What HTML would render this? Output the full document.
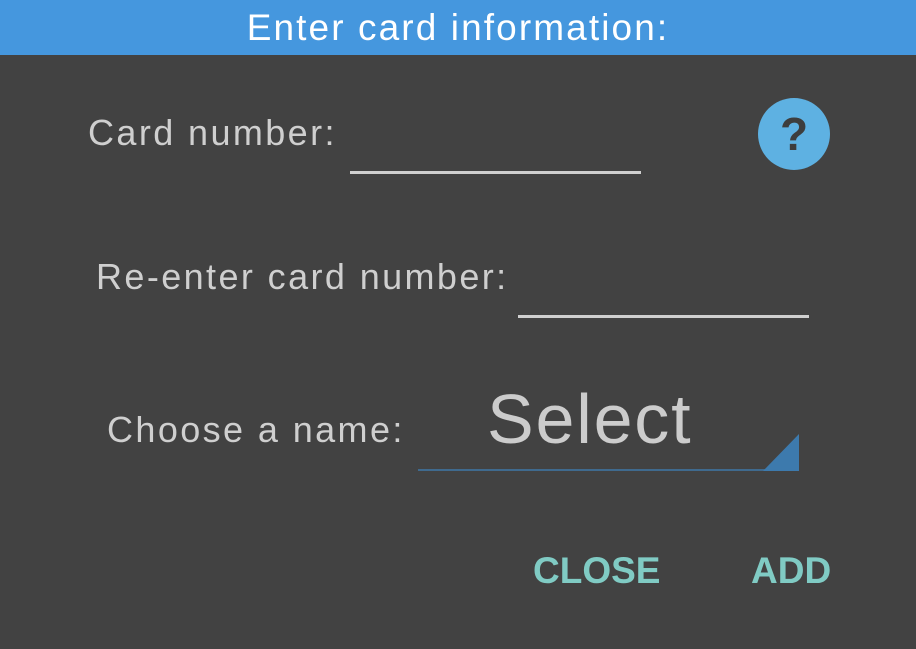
<!DOCTYPE html>
<html><head><style>
html,body{margin:0;padding:0}
body{width:916px;height:649px;background:#424242;position:relative;overflow:hidden;font-family:"Liberation Sans",sans-serif}
.h{position:absolute;left:0;top:0;width:916px;height:55px;background:#4597de;color:#fff;font-size:37px;text-align:center;line-height:55px;letter-spacing:2.1px}
.t{position:absolute;color:#cfcfcf;font-size:36px;white-space:nowrap;line-height:1;letter-spacing:2.4px}
.l{position:absolute;height:3px;background:#d0d0d0}
.b{position:absolute;color:#80cbc4;font-size:37px;font-weight:bold;line-height:1}
</style></head><body>
<div class="h">Enter card information:</div>
<div class="t" style="left:88px;top:115px">Card number:</div>
<div class="l" style="left:350px;top:171px;width:291px"></div>
<svg style="position:absolute;left:758px;top:98px" width="72" height="72" viewBox="0 0 72 72"><circle cx="36" cy="36" r="36" fill="#5eb1e2"/><text x="36" y="52" text-anchor="middle" font-family="Liberation Sans" font-weight="bold" font-size="46" fill="#3d3d3d">?</text></svg>
<div class="t" style="left:96px;top:259px">Re-enter card number:</div>
<div class="l" style="left:518px;top:315px;width:291px"></div>
<div class="t" style="left:107px;top:412px">Choose a name:</div>
<div class="t" style="left:487px;top:384px;font-size:70px;color:#cccccc;letter-spacing:1.8px">Select</div>
<div style="position:absolute;left:418px;top:469px;width:381px;height:2px;background:#3f6a8e"></div>
<svg style="position:absolute;left:763px;top:434px" width="36" height="37"><polygon points="0,37 36,0 36,37" fill="#3d7aad"/></svg>
<div class="b" style="left:533px;top:552px">CLOSE</div>
<div class="b" style="left:751px;top:552px">ADD</div>
</body></html>
